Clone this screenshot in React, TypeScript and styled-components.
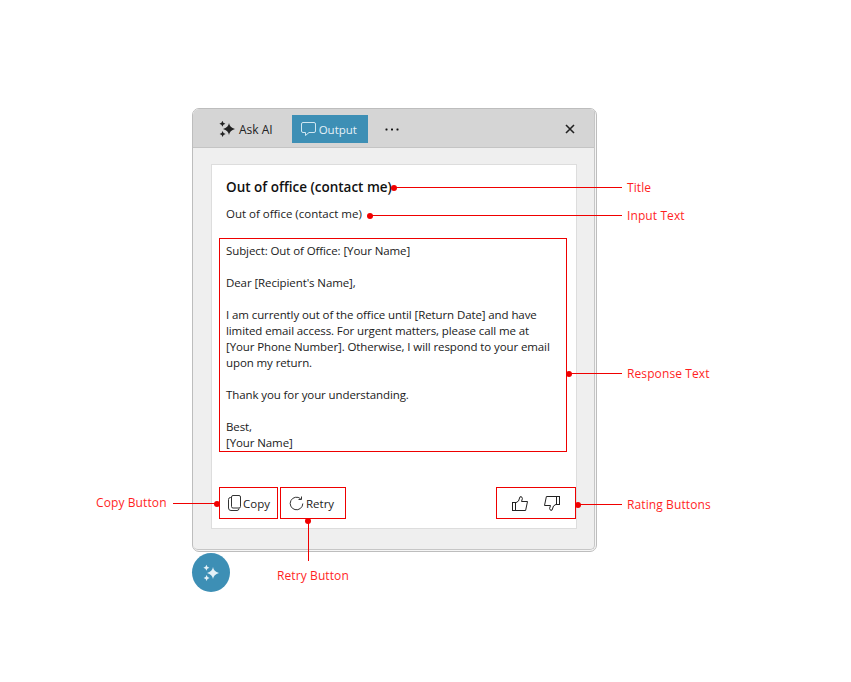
import React from "react";
import styled, { createGlobalStyle } from "styled-components";

const GlobalStyle = createGlobalStyle`
  html, body {
    margin: 0;
    padding: 0;
    background: #ffffff;
  }
  body {
    font-family: "Open Sans", "Noto Sans", sans-serif;
    color: #1a1a1a;
  }
`;

const RESPONSE_LINES = [
  "Subject: Out of Office: [Your Name]",
  "",
  "Dear [Recipient's Name],",
  "",
  "I am currently out of the office until [Return Date] and have",
  "limited email access. For urgent matters, please call me at",
  "[Your Phone Number]. Otherwise, I will respond to your email",
  "upon my return.",
  "",
  "Thank you for your understanding.",
  "",
  "Best,",
  "[Your Name]",
];

const SparkleIcon: React.FC<{ color: string; size: number }> = ({ color, size }) => (
  <svg width={size} height={size} viewBox="0 0 18 18" fill={color}>
    <path d="M11 3 Q11.6 7.4 17 9 Q11.6 10.6 11 15 Q10.4 10.6 5 9 Q10.4 7.4 11 3 Z" />
    <path d="M4.4 0.8 Q4.8 3.2 7.4 3.8 Q4.8 4.4 4.4 6.8 Q4 4.4 1.4 3.8 Q4 3.2 4.4 0.8 Z" />
    <path d="M4.6 11 Q5 13.4 7.6 14 Q5 14.6 4.6 17 Q4.2 14.6 1.6 14 Q4.2 13.4 4.6 11 Z" />
  </svg>
);

const ChatIcon = () => (
  <svg width="17" height="16" viewBox="0 0 17 16" fill="none" stroke="#cfe6f1" strokeWidth="1">
    <path d="M3 1.5 H14 A1.5 1.5 0 0 1 15.5 3 V10 A1.5 1.5 0 0 1 14 11.5 H9 L5.5 14.5 V11.5 H3 A1.5 1.5 0 0 1 1.5 10 V3 A1.5 1.5 0 0 1 3 1.5 Z" />
  </svg>
);

const MoreIcon = () => (
  <svg width="14" height="3" viewBox="0 0 14 3" fill="#111111">
    <rect x="0.5" y="0.5" width="2" height="2" rx="0.4" />
    <rect x="6" y="0.5" width="2" height="2" rx="0.4" />
    <rect x="11.5" y="0.5" width="2" height="2" rx="0.4" />
  </svg>
);

const CloseIcon = () => (
  <svg width="10" height="10" viewBox="0 0 10 10" stroke="#222222" strokeWidth="1.6" fill="none">
    <path d="M1 1 L9 9 M9 1 L1 9" />
  </svg>
);

const CopyIcon = () => (
  <svg width="13" height="16" viewBox="0 0 13 16" fill="none" stroke="#333333" strokeWidth="1">
    <rect x="3.5" y="0.5" width="9" height="12.5" rx="1.5" />
    <path d="M3.5 2.5 H2.5 A2 2 0 0 0 0.5 4.5 V13 A2.5 2.5 0 0 0 3 15.5 H9 A2 2 0 0 0 11 13.5" />
  </svg>
);

const RetryIcon = () => (
  <svg width="15" height="15" viewBox="0 0 15 15" fill="none" stroke="#333333" strokeWidth="1">
    <path d="M13.8 7.5 A6.3 6.3 0 1 1 11.6 2.7" />
    <path d="M12.5 0.5 V3.5 H9.5" />
  </svg>
);

const THUMB_PATH = "M3.5 7 L6.5 5 L8 0.8 H9.6 L10.4 2.6 L9.5 5.5 H15.5 L13.6 14.5 H3.5";

const ThumbUpIcon = () => (
  <svg width="16" height="15" viewBox="0 0 16 15" fill="none" stroke="#222222" strokeWidth="1">
    <rect x="0.5" y="6.5" width="3" height="8" />
    <path d={THUMB_PATH} />
  </svg>
);

const ThumbDownIcon = () => (
  <svg width="16" height="15" viewBox="0 0 16 15" fill="none" stroke="#222222" strokeWidth="1">
    <g transform="rotate(180 8 7.5)">
      <rect x="0.5" y="6.5" width="3" height="8" />
      <path d={THUMB_PATH} />
    </g>
  </svg>
);

export default function App() {
  return (
    <>
      <GlobalStyle />
      <Stage>
        <Window>
          <Frame>
            <Header>
              <Tab>
                <SparkleIcon color="#222222" size={18} />
                Ask AI
              </Tab>
              <Tab $active>
                <ChatIcon />
                Output
              </Tab>
              <MoreButton>
                <MoreIcon />
              </MoreButton>
              <CloseButton>
                <CloseIcon />
              </CloseButton>
            </Header>
            <Body>
              <Card>
                <Title>Out of office (contact me)</Title>
                <InputText>Out of office (contact me)</InputText>
                <ResponseBox>
                  {RESPONSE_LINES.map((line, index) => (
                    <ResponseLine key={index}>{line}</ResponseLine>
                  ))}
                </ResponseBox>
                <Actions>
                  <ActionButton $width={59}>
                    <CopyIcon />
                    Copy
                  </ActionButton>
                  <ActionButton $width={66}>
                    <RetryIcon />
                    Retry
                  </ActionButton>
                  <RatingGroup>
                    <ThumbUpIcon />
                    <ThumbDownIcon />
                  </RatingGroup>
                </Actions>
              </Card>
            </Body>
          </Frame>
        </Window>
        <Fab>
          <SparkleIcon color="#e4f1f7" size={18} />
        </Fab>

        <HLine $x={394} $y={187} $width={228} />
        <Dot $x={394} $y={187} />
        <Label $x={627} $y={188}>Title</Label>

        <HLine $x={370} $y={215} $width={252} />
        <Dot $x={370} $y={215} />
        <Label $x={627} $y={216}>Input Text</Label>

        <HLine $x={569} $y={373} $width={53} />
        <Dot $x={569} $y={373} />
        <Label $x={627} $y={374}>Response Text</Label>

        <HLine $x={578} $y={504} $width={44} />
        <Dot $x={578} $y={504} />
        <Label $x={627} $y={505}>Rating Buttons</Label>

        <HLine $x={173} $y={503} $width={44} />
        <Dot $x={217} $y={503} />
        <Label $x={96} $y={503}>Copy Button</Label>

        <VLine $x={308} $y={520} $height={41} />
        <Dot $x={308} $y={520} />
        <Label $x={277} $y={576}>Retry Button</Label>
      </Stage>
    </>
  );
}

// Styled

const Stage = styled.div`
  position: relative;
  width: 851px;
  height: 682px;
  padding: 108px 0 0 192px;
  box-sizing: border-box;
  overflow: hidden;
`;

const Window = styled.div`
  width: 405px;
  height: 444px;
  box-sizing: border-box;
  padding: 0 1px 1px 0;
  background: #f6f6f6;
  border: 1px solid #bdbdbd;
  border-radius: 7px;
  overflow: hidden;
`;

const Frame = styled.div`
  height: 100%;
  box-sizing: border-box;
  display: flex;
  flex-direction: column;
  background: #efefef;
  border-right: 1px solid #c6c6c6;
  border-bottom: 1px solid #c6c6c6;
  border-radius: 0 0 5px 5px;
  overflow: hidden;
`;

const Header = styled.div`
  height: 39px;
  flex-shrink: 0;
  display: flex;
  align-items: center;
  gap: 11px;
  padding: 2px 17px 0 17px;
  box-sizing: border-box;
  background: #d5d5d5;
  border-bottom: 1px solid #c4c4c4;
`;

const Tab = styled.div<{ $active?: boolean }>`
  width: ${({ $active }) => ($active ? "76px" : "auto")};
  height: 28px;
  box-sizing: border-box;
  display: flex;
  align-items: center;
  gap: ${({ $active }) => ($active ? "2px" : "3px")};
  padding: 0 8px;
  font-size: ${({ $active }) => ($active ? "11.5px" : "12px")};
  color: ${({ $active }) => ($active ? "#e6f2f8" : "#222222")};
  background: ${({ $active }) => ($active ? "#3d8fb5" : "transparent")};
`;

const MoreButton = styled.div`
  margin-left: 6px;
  display: flex;
`;

const CloseButton = styled.div`
  margin-left: auto;
  margin-right: 2px;
  display: flex;
`;

const Body = styled.div`
  flex: 1;
  padding: 16px 17px 20px 18px;
  display: flex;
  min-height: 0;
`;

const Card = styled.div`
  flex: 1;
  min-width: 0;
  display: flex;
  flex-direction: column;
  padding: 0 0 9px 7px;
  background: #ffffff;
  border: 1px solid #dddddd;
`;

const Title = styled.div`
  margin: 13px 0 0 7px;
  font-size: 13.5px;
  line-height: 18px;
  font-weight: 600;
  color: #111111;
`;

const InputText = styled.div`
  margin: 10px 0 0 7px;
  font-size: 11.5px;
  line-height: 16px;
  color: #222222;
`;

const ResponseBox = styled.div`
  margin: 16px 9px 0 0;
  height: 214px;
  box-sizing: border-box;
  padding: 4px 6px 0 6px;
  border: 1px solid #ee0000;
`;

const ResponseLine = styled.div`
  min-height: 16px;
  font-size: 11.5px;
  line-height: 16px;
  letter-spacing: -0.1px;
  white-space: nowrap;
  color: #1a1a1a;
`;

const Actions = styled.div`
  margin-top: auto;
  display: flex;
  align-items: stretch;
  gap: 2px;
  height: 32px;
`;

const ActionButton = styled.div<{ $width: number }>`
  width: ${({ $width }) => $width}px;
  box-sizing: border-box;
  display: flex;
  align-items: center;
  gap: 2px;
  padding-left: 8px;
  border: 1px solid #ee0000;
  font-size: 11.5px;
  color: #222222;
`;

const RatingGroup = styled.div`
  margin-left: auto;
  width: 80px;
  box-sizing: border-box;
  display: flex;
  align-items: center;
  justify-content: center;
  gap: 16px;
  border: 1px solid #ee0000;
`;

const Fab = styled.div`
  width: 38px;
  height: 39px;
  margin-top: 1px;
  display: flex;
  align-items: center;
  justify-content: center;
  border-radius: 50%;
  background: #3d8fb5;
`;

const HLine = styled.div<{ $x: number; $y: number; $width: number }>`
  position: absolute;
  left: ${({ $x }) => $x}px;
  top: ${({ $y }) => $y}px;
  width: ${({ $width }) => $width}px;
  height: 1px;
  background: #f00000;
`;

const VLine = styled.div<{ $x: number; $y: number; $height: number }>`
  position: absolute;
  left: ${({ $x }) => $x}px;
  top: ${({ $y }) => $y}px;
  width: 1px;
  height: ${({ $height }) => $height}px;
  background: #f00000;
`;

const Dot = styled.div<{ $x: number; $y: number }>`
  position: absolute;
  left: ${({ $x }) => $x - 3}px;
  top: ${({ $y }) => $y - 2}px;
  width: 6px;
  height: 6px;
  border-radius: 50%;
  background: #f00000;
`;

const Label = styled.div<{ $x: number; $y: number }>`
  position: absolute;
  left: ${({ $x }) => $x}px;
  top: ${({ $y }) => $y - 8}px;
  font-size: 12px;
  line-height: 16px;
  letter-spacing: 0.1px;
  white-space: nowrap;
  color: #ff1f1f;
`;
